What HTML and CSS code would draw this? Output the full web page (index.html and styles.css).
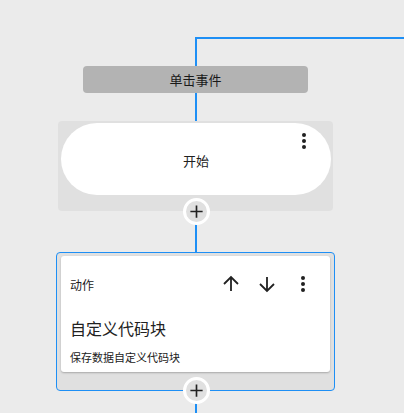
FILE: index.html
```html
<!DOCTYPE html>
<html lang="zh">
<head>
<meta charset="utf-8">
<link rel="stylesheet" href="styles.css">
</head>
<body>
<div class="canvas">
  <div class="elbow"></div>
  <div class="flow">
    <div class="event">单击事件</div>
    <div class="wire w-start"></div>
    <div class="start-block">
      <div class="pill">
        <span class="pill-text">开始</span>
        <svg class="pill-menu icon" viewBox="0 0 24 24"><circle cx="12" cy="6" r="2"/><circle cx="12" cy="12" r="2"/><circle cx="12" cy="18" r="2"/></svg>
      </div>
      <div class="add"><svg viewBox="0 0 24 24"><path d="M12 5v14M5 12h14"/></svg></div>
    </div>
    <div class="wire w-action"></div>
    <div class="action-block">
      <div class="card">
        <div class="card-head">
          <span class="label">动作</span>
          <div class="tools">
            <svg class="icon stroke" viewBox="0 0 24 24"><path d="M12 19V5M5 12l7-7 7 7"/></svg>
            <svg class="icon stroke" viewBox="0 0 24 24"><path d="M12 5v14M5 12l7 7 7-7"/></svg>
            <svg class="icon" viewBox="0 0 24 24"><circle cx="12" cy="6" r="2"/><circle cx="12" cy="12" r="2"/><circle cx="12" cy="18" r="2"/></svg>
          </div>
        </div>
        <div class="title">自定义代码块</div>
        <div class="desc">保存数据自定义代码块</div>
      </div>
      <div class="add"><svg viewBox="0 0 24 24"><path d="M12 5v14M5 12h14"/></svg></div>
    </div>
    <div class="wire w-end"></div>
  </div>
</div>
</body>
</html>
```
FILE: styles.css
```css
html, body {
  margin: 0;
  padding: 0;
  background: #ebebeb;
  font-family: "Noto Sans CJK SC", "Noto Sans", sans-serif;
  color: #212121;
  overflow: hidden;
}
.canvas {
  width: 404px;
  height: 413px;
  overflow: hidden;
}
.elbow {
  margin-top: 37px;
  margin-left: 195px;
  height: 27px;
  border-top: 2px solid #1e8ff5;
  border-left: 2px solid #1e8ff5;
}
.flow {
  margin-left: 56px;
  width: 279px;
  display: flex;
  flex-direction: column;
  align-items: center;
}
.event {
  width: 225px;
  height: 27px;
  background: #b3b3b3;
  border-radius: 4px;
  font-size: 13px;
  line-height: 27px;
  text-align: center;
  color: #1a1a1a;
}
.wire {
  width: 2px;
  background: #1e8ff5;
  margin-left: 1px;
}
.w-start { height: 28px; }
.w-action { height: 41px; }
.w-end { height: 30px; }
.start-block {
  position: relative;
  width: 275px;
  height: 90px;
  box-sizing: border-box;
  padding: 2px 2px 0 3px;
  background: #e0e0e0;
  border-radius: 4px;
}
.pill {
  position: relative;
  height: 72px;
  border-radius: 36px;
  background: #fff;
  display: flex;
  align-items: center;
  justify-content: center;
}
.pill-text {
  font-size: 13px;
  padding-top: 3px;
}
.pill-menu {
  position: absolute;
  right: 15px;
  top: 6px;
}
.icon {
  width: 24px;
  height: 24px;
  fill: #212121;
  display: block;
}
.icon.stroke {
  fill: none;
  stroke: #212121;
  stroke-width: 1.8;
}
.add {
  position: absolute;
  left: 50%;
  bottom: 0;
  width: 27px;
  height: 27px;
  box-sizing: border-box;
  margin-left: -13px;
  margin-bottom: -13.5px;
  border: 3px solid #fff;
  border-radius: 50%;
  background: #e0e0e0;
  display: flex;
  align-items: center;
  justify-content: center;
}
.add svg {
  width: 21px;
  height: 21px;
  flex: none;
  fill: none;
  stroke: #222;
  stroke-width: 1.9;
}
.action-block {
  position: relative;
  width: 279px;
  height: 139px;
  box-sizing: border-box;
  padding: 3px 4px 0 4px;
  border: 1px solid #1e8ff5;
  border-radius: 4px;
  background: #e0e0e0;
}
.action-block .add { margin-bottom: -14px; }
.card {
  height: 116px;
  box-sizing: border-box;
  background: #fff;
  border-radius: 3px;
  box-shadow: 0 1px 2px rgba(0,0,0,0.25);
  padding: 8px 15px 0 9px;
}
.card-head {
  height: 40px;
  display: flex;
  align-items: center;
  justify-content: space-between;
}
.label {
  font-size: 12px;
}
.tools {
  display: flex;
  gap: 12px;
}
.title {
  margin-top: 14px;
  font-size: 16px;
  line-height: 20px;
}
.desc {
  margin-top: 12px;
  font-size: 11px;
  line-height: 14px;
}
```
